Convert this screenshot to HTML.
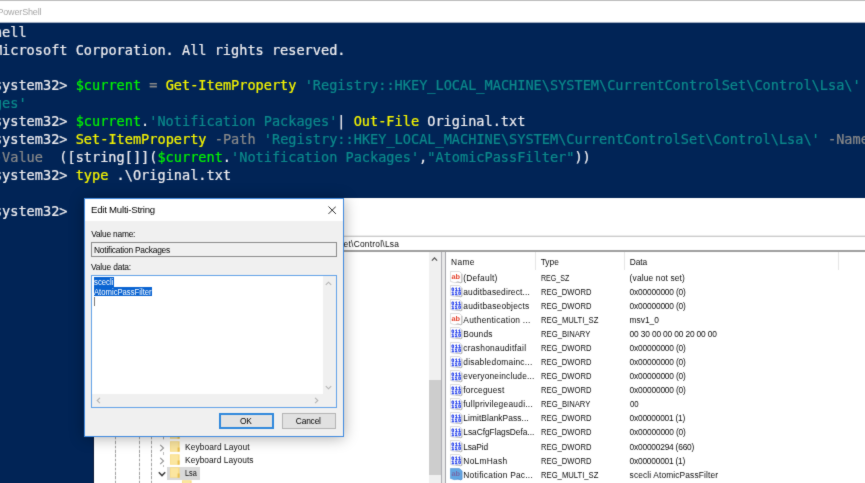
<!DOCTYPE html>
<html lang="en"><head><meta charset="utf-8"><title>PowerShell / Registry Editor - Edit Multi-String</title>
<style>
html,body{margin:0;padding:0;overflow:hidden}
body{width:865px;height:483px;overflow:hidden;position:relative;background:#fff}
.b{position:absolute;display:block}
.t{position:absolute;display:block;white-space:pre;margin:0;padding:0}
.u{font-family:"Liberation Sans",sans-serif}
.m{font-family:"DejaVu Sans Mono","Liberation Mono",monospace;-webkit-text-stroke:0.22px currentColor}
.g{color:#00f400}.y{color:#f4f400}.c{color:#0b8a8c}.d{color:#8a8a8a}
#w{position:absolute;left:-12px;top:-12px;width:889px;height:507px;background:#fff;filter:url(#soft)}
#c{position:absolute;left:12px;top:12px;width:865px;height:483px}
</style></head><body><svg width="0" height="0" style="position:absolute"><defs><filter id="soft" x="0" y="0" width="100%" height="100%" color-interpolation-filters="sRGB"><feConvolveMatrix order="3" preserveAlpha="true" kernelMatrix="0.02 0.07 0.02 0.07 0.64 0.07 0.02 0.07 0.02"/></filter></defs></svg><div id="w"><div id="c">

<div class="b" style="left:-12px;top:-12px;width:889px;height:13px;background:#bdbdbd;"></div>
<div class="b" style="left:-12px;top:22px;width:889px;height:1px;background:#a3afc2;"></div>
<div class="b" style="left:-12px;top:23px;width:889px;height:175px;background:#012456;"></div>
<div class="b" style="left:-12px;top:198px;width:106px;height:297px;background:#012456;"></div>
<div class="b" style="left:93px;top:437px;width:1px;height:58px;background:#0a1a3a;"></div>
<span class="t u" style="left:-2.60px;top:6.80px;font-size:9.0px;line-height:11.7px;color:#a6a6a6;letter-spacing:-0.153px;">PowerShell</span>
<span class="t m" style="left:-6.10px;top:23.90px;font-size:13.58px;line-height:17.65px;color:#eeedf0;letter-spacing:0.001px;">hell</span>
<span class="t m" style="left:-6.10px;top:41.76px;font-size:13.58px;line-height:17.65px;color:#eeedf0;letter-spacing:0.002px;">Microsoft Corporation. All rights reserved.</span>
<span class="t m" style="left:-6.10px;top:77.48px;font-size:13.58px;line-height:17.65px;color:#eeedf0;letter-spacing:0.002px;">system32&gt; <span class="g">$current</span><span class="d"> = </span><span class="y">Get-ItemProperty</span> <span class="c">'Registry::HKEY_LOCAL_MACHINE\SYSTEM\CurrentControlSet\Control\Lsa\'</span></span>
<span class="t m" style="left:-6.10px;top:95.34px;font-size:13.58px;line-height:17.65px;color:#eeedf0;letter-spacing:0.001px;"><span class="c">ges'</span></span>
<span class="t m" style="left:-6.10px;top:113.20px;font-size:13.58px;line-height:17.65px;color:#eeedf0;letter-spacing:0.001px;">system32&gt; <span class="g">$current</span>.<span class="c">'Notification Packages'</span>| <span class="y">Out-File</span> Original.txt</span>
<span class="t m" style="left:-6.10px;top:131.07px;font-size:13.58px;line-height:17.65px;color:#eeedf0;letter-spacing:0.002px;">system32&gt; <span class="y">Set-ItemProperty</span> <span class="d">-Path</span> <span class="c">'Registry::HKEY_LOCAL_MACHINE\SYSTEM\CurrentControlSet\Control\Lsa\'</span> <span class="d">-Name</span></span>
<span class="t m" style="left:-6.10px;top:148.93px;font-size:13.58px;line-height:17.65px;color:#eeedf0;letter-spacing:0.001px;"><span class="d">-Value</span>  ([string[]](<span class="g">$current</span>.<span class="c">'Notification Packages'</span>,<span class="c">"AtomicPassFilter"</span>))</span>
<span class="t m" style="left:-6.10px;top:166.79px;font-size:13.58px;line-height:17.65px;color:#eeedf0;letter-spacing:0.002px;">system32&gt; <span class="y">type</span> .\Original.txt</span>
<span class="t m" style="left:-6.10px;top:202.51px;font-size:13.58px;line-height:17.65px;color:#eeedf0;letter-spacing:0.002px;">system32&gt;</span>
<div class="b" style="left:94px;top:198px;width:783px;height:297px;background:#fff;"></div>
<div class="b" style="left:94px;top:235px;width:783px;height:1px;background:#ececec;"></div>
<div class="b" style="left:94px;top:236px;width:783px;height:1px;background:#cbcbcb;"></div>
<div class="b" style="left:94px;top:250px;width:783px;height:2px;background:#9e9e9e;"></div>
<span class="t u" style="left:117.60px;top:238.91px;font-size:8.4px;line-height:10.92px;color:#0c0c0c;letter-spacing:-0.218px;">Computer\HKEY_LOCAL_MACHINE\SYSTEM\CurrentControlS</span>
<span class="t u" style="left:343.60px;top:238.91px;font-size:8.4px;line-height:10.92px;color:#0c0c0c;letter-spacing:0.247px;">et\Control\Lsa</span>
<div class="b" style="left:115px;top:252px;width:1px;height:243px;background:repeating-linear-gradient(180deg,#a2a2a2 0,#a2a2a2 2.6px,#e4e4e4 2.6px,#e4e4e4 4.4px)"></div>
<div class="b" style="left:139px;top:252px;width:1px;height:243px;background:repeating-linear-gradient(180deg,#a2a2a2 0,#a2a2a2 2.6px,#e4e4e4 2.6px,#e4e4e4 4.4px)"></div>
<div class="b" style="left:151px;top:252px;width:1px;height:243px;background:repeating-linear-gradient(180deg,#a2a2a2 0,#a2a2a2 2.6px,#e4e4e4 2.6px,#e4e4e4 4.4px)"></div>
<div class="b" style="left:163px;top:252px;width:1px;height:188px;background:repeating-linear-gradient(180deg,#a2a2a2 0,#a2a2a2 2.6px,#e4e4e4 2.6px,#e4e4e4 4.4px)"></div>
<svg class="b" style="left:170px;top:428.0px" width="9.6" height="11.0" viewBox="0 0 9.6 10.4"><rect x="0" y="0" width="9.6" height="10.4" fill="#f9db80"/><rect x="0.6" y="0.8" width="7.6" height="8.8" fill="#fbe6a0"/><rect x="7.6" y="6.2" width="2" height="4.2" fill="#e9c04f"/></svg>
<svg class="b" style="left:170px;top:441.0px" width="9.6" height="11.0" viewBox="0 0 9.6 10.4"><rect x="0" y="0" width="9.6" height="10.4" fill="#f9db80"/><rect x="0.6" y="0.8" width="7.6" height="8.8" fill="#fbe6a0"/><rect x="7.6" y="6.2" width="2" height="4.2" fill="#e9c04f"/></svg>
<svg class="b" style="left:170px;top:454.0px" width="9.6" height="11.0" viewBox="0 0 9.6 10.4"><rect x="0" y="0" width="9.6" height="10.4" fill="#f9db80"/><rect x="0.6" y="0.8" width="7.6" height="8.8" fill="#fbe6a0"/><rect x="7.6" y="6.2" width="2" height="4.2" fill="#e9c04f"/></svg>
<div class="b" style="left:167px;top:467px;width:33px;height:13px;background:#d9d9d9;"></div>
<svg class="b" style="left:170px;top:467.3px" width="9.6" height="11.0" viewBox="0 0 9.6 10.4"><rect x="0" y="0" width="9.6" height="10.4" fill="#f9db80"/><rect x="0.6" y="0.8" width="7.6" height="8.8" fill="#fbe6a0"/><rect x="7.6" y="6.2" width="2" height="4.2" fill="#e9c04f"/></svg>
<svg class="b" style="left:182px;top:480.4px" width="9.6" height="11.0" viewBox="0 0 9.6 10.4"><rect x="0" y="0" width="9.6" height="10.4" fill="#f9db80"/><rect x="0.6" y="0.8" width="7.6" height="8.8" fill="#fbe6a0"/><rect x="7.6" y="6.2" width="2" height="4.2" fill="#e9c04f"/></svg>
<svg class="b" style="left:159.4px;top:443.6px" width="6" height="8" viewBox="0 0 6 8"><path d="M1.2 0.9 L4.5 4 L1.2 7.1" fill="none" stroke="#969696" stroke-width="1.15"/></svg>
<svg class="b" style="left:159.4px;top:456.6px" width="6" height="8" viewBox="0 0 6 8"><path d="M1.2 0.9 L4.5 4 L1.2 7.1" fill="none" stroke="#969696" stroke-width="1.15"/></svg>
<svg class="b" style="left:158.3px;top:470.6px" width="8" height="6" viewBox="0 0 8 6"><path d="M0.8 1.2 L4 4.6 L7.2 1.2" fill="none" stroke="#404040" stroke-width="1.5"/></svg>
<div class="b" style="left:163px;top:452px;width:1px;height:3px;background:#bdbdbd"></div>
<div class="b" style="left:163px;top:465px;width:1px;height:2px;background:#bdbdbd"></div>
<span class="t u" style="left:185.00px;top:441.61px;font-size:8.4px;line-height:10.92px;color:#0c0c0c;letter-spacing:0.098px;">Keyboard Layout</span>
<span class="t u" style="left:185.00px;top:454.50px;font-size:8.4px;line-height:10.92px;color:#0c0c0c;letter-spacing:0.068px;">Keyboard Layouts</span>
<span class="t u" style="left:185.00px;top:467.61px;font-size:8.4px;line-height:10.92px;color:#0c0c0c;transform:scaleX(0.8731);transform-origin:0 0;">Lsa</span>
<div class="b" style="left:429px;top:252px;width:12px;height:243px;background:#f0f0f0;"></div>
<div class="b" style="left:429px;top:380px;width:12px;height:95px;background:#cdcdcd;"></div>
<svg class="b" style="left:431px;top:256.2px" width="7" height="6" viewBox="0 0 7 6"><path d="M0.9 4.6 L3.5 1.8 L6.1 4.6" fill="none" stroke="#505050" stroke-width="1.2"/></svg>
<div class="b" style="left:441px;top:252px;width:1px;height:243px;background:#adadb3;"></div>
<div class="b" style="left:442px;top:252px;width:3px;height:243px;background:#e9e9e9;"></div>
<div class="b" style="left:445px;top:252px;width:1px;height:243px;background:#a4a4aa;"></div>
<div class="b" style="left:535px;top:252px;width:1px;height:18px;background:#e5e5e5;"></div>
<div class="b" style="left:624px;top:252px;width:1px;height:18px;background:#e5e5e5;"></div>
<div class="b" style="left:838px;top:252px;width:1px;height:18px;background:#e5e5e5;"></div>
<span class="t u" style="left:451.00px;top:256.50px;font-size:8.4px;line-height:10.92px;color:#0c0c0c;letter-spacing:0.364px;">Name</span>
<span class="t u" style="left:540.70px;top:256.50px;font-size:8.4px;line-height:10.92px;color:#0c0c0c;letter-spacing:0.011px;">Type</span>
<span class="t u" style="left:629.70px;top:256.50px;font-size:8.4px;line-height:10.92px;color:#0c0c0c;letter-spacing:-0.076px;">Data</span>
<svg class="b" style="left:449.8px;top:271.1px" width="13" height="13" viewBox="0 0 13 13"><path d="M0.4 0.5 H9.2 L11.8 2.6 V11.2 C10 12.6 8.6 10.0 6.4 11.3 C4.4 12.5 2.6 10.7 0.4 10.4 Z" fill="#fff" stroke="#cdcdcd" stroke-width="0.7"/><path d="M11.9 3 V11.3 C10 12.7 8.6 10.1 6.4 11.4" fill="none" stroke="#a8a8a8" stroke-width="0.8"/><text x="1.4" y="7.9" style="font-family:'Liberation Sans',sans-serif;font-weight:bold;font-size:7px;text-rendering:geometricPrecision" textLength="8.6" lengthAdjust="spacingAndGlyphs" fill="#e4402a">ab</text></svg>
<span class="t u" style="left:463.30px;top:272.50px;font-size:8.4px;line-height:10.92px;color:#0c0c0c;letter-spacing:0.242px;">(Default)</span>
<span class="t u" style="left:540.70px;top:272.50px;font-size:8.4px;line-height:10.92px;color:#0c0c0c;transform:scaleX(0.8444);transform-origin:0 0;">REG_SZ</span>
<span class="t u" style="left:629.60px;top:272.50px;font-size:8.4px;line-height:10.92px;color:#0c0c0c;letter-spacing:0.155px;">(value not set)</span>
<svg class="b" style="left:449.8px;top:285.2px" width="13" height="13" viewBox="0 0 13 13"><path d="M0.4 0.5 H9.2 L11.8 2.6 V11.2 C10 12.6 8.6 10.0 6.4 11.3 C4.4 12.5 2.6 10.7 0.4 10.4 Z" fill="#fff" stroke="#cdcdcd" stroke-width="0.7"/><path d="M11.9 3 V11.3 C10 12.7 8.6 10.1 6.4 11.4" fill="none" stroke="#a8a8a8" stroke-width="0.8"/><text x="1.5" y="5.7" style="font-family:'Liberation Sans',sans-serif;font-weight:bold;font-size:4.8px;text-rendering:geometricPrecision" textLength="9.4" lengthAdjust="spacing" fill="#1230ea" stroke="#1230ea" stroke-width="0.28">011</text><text x="1.5" y="9.9" style="font-family:'Liberation Sans',sans-serif;font-weight:bold;font-size:4.8px;text-rendering:geometricPrecision" textLength="9.4" lengthAdjust="spacing" fill="#1230ea" stroke="#1230ea" stroke-width="0.28">110</text></svg>
<span class="t u" style="left:463.30px;top:286.58px;font-size:8.4px;line-height:10.92px;color:#0c0c0c;letter-spacing:0.161px;">auditbasedirect...</span>
<span class="t u" style="left:540.70px;top:286.58px;font-size:8.4px;line-height:10.92px;color:#0c0c0c;transform:scaleX(0.9102);transform-origin:0 0;">REG_DWORD</span>
<span class="t u" style="left:629.60px;top:286.58px;font-size:8.4px;line-height:10.92px;color:#0c0c0c;letter-spacing:-0.191px;">0x00000000 (0)</span>
<svg class="b" style="left:449.8px;top:299.3px" width="13" height="13" viewBox="0 0 13 13"><path d="M0.4 0.5 H9.2 L11.8 2.6 V11.2 C10 12.6 8.6 10.0 6.4 11.3 C4.4 12.5 2.6 10.7 0.4 10.4 Z" fill="#fff" stroke="#cdcdcd" stroke-width="0.7"/><path d="M11.9 3 V11.3 C10 12.7 8.6 10.1 6.4 11.4" fill="none" stroke="#a8a8a8" stroke-width="0.8"/><text x="1.5" y="5.7" style="font-family:'Liberation Sans',sans-serif;font-weight:bold;font-size:4.8px;text-rendering:geometricPrecision" textLength="9.4" lengthAdjust="spacing" fill="#1230ea" stroke="#1230ea" stroke-width="0.28">011</text><text x="1.5" y="9.9" style="font-family:'Liberation Sans',sans-serif;font-weight:bold;font-size:4.8px;text-rendering:geometricPrecision" textLength="9.4" lengthAdjust="spacing" fill="#1230ea" stroke="#1230ea" stroke-width="0.28">110</text></svg>
<span class="t u" style="left:463.30px;top:300.68px;font-size:8.4px;line-height:10.92px;color:#0c0c0c;letter-spacing:0.196px;">auditbaseobjects</span>
<span class="t u" style="left:540.70px;top:300.68px;font-size:8.4px;line-height:10.92px;color:#0c0c0c;transform:scaleX(0.9102);transform-origin:0 0;">REG_DWORD</span>
<span class="t u" style="left:629.60px;top:300.68px;font-size:8.4px;line-height:10.92px;color:#0c0c0c;letter-spacing:-0.191px;">0x00000000 (0)</span>
<svg class="b" style="left:449.8px;top:313.4px" width="13" height="13" viewBox="0 0 13 13"><path d="M0.4 0.5 H9.2 L11.8 2.6 V11.2 C10 12.6 8.6 10.0 6.4 11.3 C4.4 12.5 2.6 10.7 0.4 10.4 Z" fill="#fff" stroke="#cdcdcd" stroke-width="0.7"/><path d="M11.9 3 V11.3 C10 12.7 8.6 10.1 6.4 11.4" fill="none" stroke="#a8a8a8" stroke-width="0.8"/><text x="1.4" y="7.9" style="font-family:'Liberation Sans',sans-serif;font-weight:bold;font-size:7px;text-rendering:geometricPrecision" textLength="8.6" lengthAdjust="spacingAndGlyphs" fill="#e4402a">ab</text></svg>
<span class="t u" style="left:463.30px;top:314.77px;font-size:8.4px;line-height:10.92px;color:#0c0c0c;letter-spacing:0.278px;">Authentication ...</span>
<span class="t u" style="left:540.70px;top:314.77px;font-size:8.4px;line-height:10.92px;color:#0c0c0c;transform:scaleX(0.9159);transform-origin:0 0;">REG_MULTI_SZ</span>
<span class="t u" style="left:629.60px;top:314.77px;font-size:8.4px;line-height:10.92px;color:#0c0c0c;letter-spacing:-0.021px;">msv1_0</span>
<svg class="b" style="left:449.8px;top:327.4px" width="13" height="13" viewBox="0 0 13 13"><path d="M0.4 0.5 H9.2 L11.8 2.6 V11.2 C10 12.6 8.6 10.0 6.4 11.3 C4.4 12.5 2.6 10.7 0.4 10.4 Z" fill="#fff" stroke="#cdcdcd" stroke-width="0.7"/><path d="M11.9 3 V11.3 C10 12.7 8.6 10.1 6.4 11.4" fill="none" stroke="#a8a8a8" stroke-width="0.8"/><text x="1.5" y="5.7" style="font-family:'Liberation Sans',sans-serif;font-weight:bold;font-size:4.8px;text-rendering:geometricPrecision" textLength="9.4" lengthAdjust="spacing" fill="#1230ea" stroke="#1230ea" stroke-width="0.28">011</text><text x="1.5" y="9.9" style="font-family:'Liberation Sans',sans-serif;font-weight:bold;font-size:4.8px;text-rendering:geometricPrecision" textLength="9.4" lengthAdjust="spacing" fill="#1230ea" stroke="#1230ea" stroke-width="0.28">110</text></svg>
<span class="t u" style="left:463.30px;top:328.85px;font-size:8.4px;line-height:10.92px;color:#0c0c0c;letter-spacing:0.132px;">Bounds</span>
<span class="t u" style="left:540.70px;top:328.85px;font-size:8.4px;line-height:10.92px;color:#0c0c0c;transform:scaleX(0.9175);transform-origin:0 0;">REG_BINARY</span>
<span class="t u" style="left:629.60px;top:328.85px;font-size:8.4px;line-height:10.92px;color:#0c0c0c;letter-spacing:-0.161px;">00 30 00 00 00 20 00 00</span>
<svg class="b" style="left:449.8px;top:341.5px" width="13" height="13" viewBox="0 0 13 13"><path d="M0.4 0.5 H9.2 L11.8 2.6 V11.2 C10 12.6 8.6 10.0 6.4 11.3 C4.4 12.5 2.6 10.7 0.4 10.4 Z" fill="#fff" stroke="#cdcdcd" stroke-width="0.7"/><path d="M11.9 3 V11.3 C10 12.7 8.6 10.1 6.4 11.4" fill="none" stroke="#a8a8a8" stroke-width="0.8"/><text x="1.5" y="5.7" style="font-family:'Liberation Sans',sans-serif;font-weight:bold;font-size:4.8px;text-rendering:geometricPrecision" textLength="9.4" lengthAdjust="spacing" fill="#1230ea" stroke="#1230ea" stroke-width="0.28">011</text><text x="1.5" y="9.9" style="font-family:'Liberation Sans',sans-serif;font-weight:bold;font-size:4.8px;text-rendering:geometricPrecision" textLength="9.4" lengthAdjust="spacing" fill="#1230ea" stroke="#1230ea" stroke-width="0.28">110</text></svg>
<span class="t u" style="left:463.30px;top:342.94px;font-size:8.4px;line-height:10.92px;color:#0c0c0c;letter-spacing:0.271px;">crashonauditfail</span>
<span class="t u" style="left:540.70px;top:342.94px;font-size:8.4px;line-height:10.92px;color:#0c0c0c;transform:scaleX(0.9102);transform-origin:0 0;">REG_DWORD</span>
<span class="t u" style="left:629.60px;top:342.94px;font-size:8.4px;line-height:10.92px;color:#0c0c0c;letter-spacing:-0.191px;">0x00000000 (0)</span>
<svg class="b" style="left:449.8px;top:355.6px" width="13" height="13" viewBox="0 0 13 13"><path d="M0.4 0.5 H9.2 L11.8 2.6 V11.2 C10 12.6 8.6 10.0 6.4 11.3 C4.4 12.5 2.6 10.7 0.4 10.4 Z" fill="#fff" stroke="#cdcdcd" stroke-width="0.7"/><path d="M11.9 3 V11.3 C10 12.7 8.6 10.1 6.4 11.4" fill="none" stroke="#a8a8a8" stroke-width="0.8"/><text x="1.5" y="5.7" style="font-family:'Liberation Sans',sans-serif;font-weight:bold;font-size:4.8px;text-rendering:geometricPrecision" textLength="9.4" lengthAdjust="spacing" fill="#1230ea" stroke="#1230ea" stroke-width="0.28">011</text><text x="1.5" y="9.9" style="font-family:'Liberation Sans',sans-serif;font-weight:bold;font-size:4.8px;text-rendering:geometricPrecision" textLength="9.4" lengthAdjust="spacing" fill="#1230ea" stroke="#1230ea" stroke-width="0.28">110</text></svg>
<span class="t u" style="left:463.30px;top:357.02px;font-size:8.4px;line-height:10.92px;color:#0c0c0c;letter-spacing:0.236px;">disabledomainc...</span>
<span class="t u" style="left:540.70px;top:357.02px;font-size:8.4px;line-height:10.92px;color:#0c0c0c;transform:scaleX(0.9102);transform-origin:0 0;">REG_DWORD</span>
<span class="t u" style="left:629.60px;top:357.02px;font-size:8.4px;line-height:10.92px;color:#0c0c0c;letter-spacing:-0.191px;">0x00000000 (0)</span>
<svg class="b" style="left:449.8px;top:369.7px" width="13" height="13" viewBox="0 0 13 13"><path d="M0.4 0.5 H9.2 L11.8 2.6 V11.2 C10 12.6 8.6 10.0 6.4 11.3 C4.4 12.5 2.6 10.7 0.4 10.4 Z" fill="#fff" stroke="#cdcdcd" stroke-width="0.7"/><path d="M11.9 3 V11.3 C10 12.7 8.6 10.1 6.4 11.4" fill="none" stroke="#a8a8a8" stroke-width="0.8"/><text x="1.5" y="5.7" style="font-family:'Liberation Sans',sans-serif;font-weight:bold;font-size:4.8px;text-rendering:geometricPrecision" textLength="9.4" lengthAdjust="spacing" fill="#1230ea" stroke="#1230ea" stroke-width="0.28">011</text><text x="1.5" y="9.9" style="font-family:'Liberation Sans',sans-serif;font-weight:bold;font-size:4.8px;text-rendering:geometricPrecision" textLength="9.4" lengthAdjust="spacing" fill="#1230ea" stroke="#1230ea" stroke-width="0.28">110</text></svg>
<span class="t u" style="left:463.30px;top:371.11px;font-size:8.4px;line-height:10.92px;color:#0c0c0c;letter-spacing:0.179px;">everyoneinclude...</span>
<span class="t u" style="left:540.70px;top:371.11px;font-size:8.4px;line-height:10.92px;color:#0c0c0c;transform:scaleX(0.9102);transform-origin:0 0;">REG_DWORD</span>
<span class="t u" style="left:629.60px;top:371.11px;font-size:8.4px;line-height:10.92px;color:#0c0c0c;letter-spacing:-0.191px;">0x00000000 (0)</span>
<svg class="b" style="left:449.8px;top:383.8px" width="13" height="13" viewBox="0 0 13 13"><path d="M0.4 0.5 H9.2 L11.8 2.6 V11.2 C10 12.6 8.6 10.0 6.4 11.3 C4.4 12.5 2.6 10.7 0.4 10.4 Z" fill="#fff" stroke="#cdcdcd" stroke-width="0.7"/><path d="M11.9 3 V11.3 C10 12.7 8.6 10.1 6.4 11.4" fill="none" stroke="#a8a8a8" stroke-width="0.8"/><text x="1.5" y="5.7" style="font-family:'Liberation Sans',sans-serif;font-weight:bold;font-size:4.8px;text-rendering:geometricPrecision" textLength="9.4" lengthAdjust="spacing" fill="#1230ea" stroke="#1230ea" stroke-width="0.28">011</text><text x="1.5" y="9.9" style="font-family:'Liberation Sans',sans-serif;font-weight:bold;font-size:4.8px;text-rendering:geometricPrecision" textLength="9.4" lengthAdjust="spacing" fill="#1230ea" stroke="#1230ea" stroke-width="0.28">110</text></svg>
<span class="t u" style="left:463.30px;top:385.19px;font-size:8.4px;line-height:10.92px;color:#0c0c0c;letter-spacing:0.209px;">forceguest</span>
<span class="t u" style="left:540.70px;top:385.19px;font-size:8.4px;line-height:10.92px;color:#0c0c0c;transform:scaleX(0.9102);transform-origin:0 0;">REG_DWORD</span>
<span class="t u" style="left:629.60px;top:385.19px;font-size:8.4px;line-height:10.92px;color:#0c0c0c;letter-spacing:-0.191px;">0x00000000 (0)</span>
<svg class="b" style="left:449.8px;top:397.9px" width="13" height="13" viewBox="0 0 13 13"><path d="M0.4 0.5 H9.2 L11.8 2.6 V11.2 C10 12.6 8.6 10.0 6.4 11.3 C4.4 12.5 2.6 10.7 0.4 10.4 Z" fill="#fff" stroke="#cdcdcd" stroke-width="0.7"/><path d="M11.9 3 V11.3 C10 12.7 8.6 10.1 6.4 11.4" fill="none" stroke="#a8a8a8" stroke-width="0.8"/><text x="1.5" y="5.7" style="font-family:'Liberation Sans',sans-serif;font-weight:bold;font-size:4.8px;text-rendering:geometricPrecision" textLength="9.4" lengthAdjust="spacing" fill="#1230ea" stroke="#1230ea" stroke-width="0.28">011</text><text x="1.5" y="9.9" style="font-family:'Liberation Sans',sans-serif;font-weight:bold;font-size:4.8px;text-rendering:geometricPrecision" textLength="9.4" lengthAdjust="spacing" fill="#1230ea" stroke="#1230ea" stroke-width="0.28">110</text></svg>
<span class="t u" style="left:463.30px;top:399.29px;font-size:8.4px;line-height:10.92px;color:#0c0c0c;letter-spacing:0.249px;">fullprivilegeaudi...</span>
<span class="t u" style="left:540.70px;top:399.29px;font-size:8.4px;line-height:10.92px;color:#0c0c0c;transform:scaleX(0.9175);transform-origin:0 0;">REG_BINARY</span>
<span class="t u" style="left:629.60px;top:399.29px;font-size:8.4px;line-height:10.92px;color:#0c0c0c;transform:scaleX(0.9327);transform-origin:0 0;">00</span>
<svg class="b" style="left:449.8px;top:412.0px" width="13" height="13" viewBox="0 0 13 13"><path d="M0.4 0.5 H9.2 L11.8 2.6 V11.2 C10 12.6 8.6 10.0 6.4 11.3 C4.4 12.5 2.6 10.7 0.4 10.4 Z" fill="#fff" stroke="#cdcdcd" stroke-width="0.7"/><path d="M11.9 3 V11.3 C10 12.7 8.6 10.1 6.4 11.4" fill="none" stroke="#a8a8a8" stroke-width="0.8"/><text x="1.5" y="5.7" style="font-family:'Liberation Sans',sans-serif;font-weight:bold;font-size:4.8px;text-rendering:geometricPrecision" textLength="9.4" lengthAdjust="spacing" fill="#1230ea" stroke="#1230ea" stroke-width="0.28">011</text><text x="1.5" y="9.9" style="font-family:'Liberation Sans',sans-serif;font-weight:bold;font-size:4.8px;text-rendering:geometricPrecision" textLength="9.4" lengthAdjust="spacing" fill="#1230ea" stroke="#1230ea" stroke-width="0.28">110</text></svg>
<span class="t u" style="left:463.30px;top:413.37px;font-size:8.4px;line-height:10.92px;color:#0c0c0c;letter-spacing:0.069px;">LimitBlankPass...</span>
<span class="t u" style="left:540.70px;top:413.37px;font-size:8.4px;line-height:10.92px;color:#0c0c0c;transform:scaleX(0.9102);transform-origin:0 0;">REG_DWORD</span>
<span class="t u" style="left:629.60px;top:413.37px;font-size:8.4px;line-height:10.92px;color:#0c0c0c;letter-spacing:-0.227px;">0x00000001 (1)</span>
<svg class="b" style="left:449.8px;top:426.0px" width="13" height="13" viewBox="0 0 13 13"><path d="M0.4 0.5 H9.2 L11.8 2.6 V11.2 C10 12.6 8.6 10.0 6.4 11.3 C4.4 12.5 2.6 10.7 0.4 10.4 Z" fill="#fff" stroke="#cdcdcd" stroke-width="0.7"/><path d="M11.9 3 V11.3 C10 12.7 8.6 10.1 6.4 11.4" fill="none" stroke="#a8a8a8" stroke-width="0.8"/><text x="1.5" y="5.7" style="font-family:'Liberation Sans',sans-serif;font-weight:bold;font-size:4.8px;text-rendering:geometricPrecision" textLength="9.4" lengthAdjust="spacing" fill="#1230ea" stroke="#1230ea" stroke-width="0.28">011</text><text x="1.5" y="9.9" style="font-family:'Liberation Sans',sans-serif;font-weight:bold;font-size:4.8px;text-rendering:geometricPrecision" textLength="9.4" lengthAdjust="spacing" fill="#1230ea" stroke="#1230ea" stroke-width="0.28">110</text></svg>
<span class="t u" style="left:463.30px;top:427.44px;font-size:8.4px;line-height:10.92px;color:#0c0c0c;letter-spacing:-0.044px;">LsaCfgFlagsDefa...</span>
<span class="t u" style="left:540.70px;top:427.44px;font-size:8.4px;line-height:10.92px;color:#0c0c0c;transform:scaleX(0.9102);transform-origin:0 0;">REG_DWORD</span>
<span class="t u" style="left:629.60px;top:427.44px;font-size:8.4px;line-height:10.92px;color:#0c0c0c;letter-spacing:-0.191px;">0x00000000 (0)</span>
<svg class="b" style="left:449.8px;top:440.1px" width="13" height="13" viewBox="0 0 13 13"><path d="M0.4 0.5 H9.2 L11.8 2.6 V11.2 C10 12.6 8.6 10.0 6.4 11.3 C4.4 12.5 2.6 10.7 0.4 10.4 Z" fill="#fff" stroke="#cdcdcd" stroke-width="0.7"/><path d="M11.9 3 V11.3 C10 12.7 8.6 10.1 6.4 11.4" fill="none" stroke="#a8a8a8" stroke-width="0.8"/><text x="1.5" y="5.7" style="font-family:'Liberation Sans',sans-serif;font-weight:bold;font-size:4.8px;text-rendering:geometricPrecision" textLength="9.4" lengthAdjust="spacing" fill="#1230ea" stroke="#1230ea" stroke-width="0.28">011</text><text x="1.5" y="9.9" style="font-family:'Liberation Sans',sans-serif;font-weight:bold;font-size:4.8px;text-rendering:geometricPrecision" textLength="9.4" lengthAdjust="spacing" fill="#1230ea" stroke="#1230ea" stroke-width="0.28">110</text></svg>
<span class="t u" style="left:463.30px;top:441.54px;font-size:8.4px;line-height:10.92px;color:#0c0c0c;letter-spacing:-0.152px;">LsaPid</span>
<span class="t u" style="left:540.70px;top:441.54px;font-size:8.4px;line-height:10.92px;color:#0c0c0c;transform:scaleX(0.9102);transform-origin:0 0;">REG_DWORD</span>
<span class="t u" style="left:629.60px;top:441.54px;font-size:8.4px;line-height:10.92px;color:#0c0c0c;letter-spacing:-0.219px;">0x00000294 (660)</span>
<svg class="b" style="left:449.8px;top:454.2px" width="13" height="13" viewBox="0 0 13 13"><path d="M0.4 0.5 H9.2 L11.8 2.6 V11.2 C10 12.6 8.6 10.0 6.4 11.3 C4.4 12.5 2.6 10.7 0.4 10.4 Z" fill="#fff" stroke="#cdcdcd" stroke-width="0.7"/><path d="M11.9 3 V11.3 C10 12.7 8.6 10.1 6.4 11.4" fill="none" stroke="#a8a8a8" stroke-width="0.8"/><text x="1.5" y="5.7" style="font-family:'Liberation Sans',sans-serif;font-weight:bold;font-size:4.8px;text-rendering:geometricPrecision" textLength="9.4" lengthAdjust="spacing" fill="#1230ea" stroke="#1230ea" stroke-width="0.28">011</text><text x="1.5" y="9.9" style="font-family:'Liberation Sans',sans-serif;font-weight:bold;font-size:4.8px;text-rendering:geometricPrecision" textLength="9.4" lengthAdjust="spacing" fill="#1230ea" stroke="#1230ea" stroke-width="0.28">110</text></svg>
<span class="t u" style="left:463.30px;top:455.62px;font-size:8.4px;line-height:10.92px;color:#0c0c0c;letter-spacing:0.287px;">NoLmHash</span>
<span class="t u" style="left:540.70px;top:455.62px;font-size:8.4px;line-height:10.92px;color:#0c0c0c;transform:scaleX(0.9102);transform-origin:0 0;">REG_DWORD</span>
<span class="t u" style="left:629.60px;top:455.62px;font-size:8.4px;line-height:10.92px;color:#0c0c0c;letter-spacing:-0.227px;">0x00000001 (1)</span>
<svg class="b" style="left:449.8px;top:468.3px" width="13" height="13" viewBox="0 0 13 13"><path d="M0.4 0.5 H9.2 L11.8 2.6 V11.2 C10 12.6 8.6 10.0 6.4 11.3 C4.4 12.5 2.6 10.7 0.4 10.4 Z" fill="#62a6e2" stroke="#5b9bd8" stroke-width="0.7"/><path d="M11.9 3 V11.3 C10 12.7 8.6 10.1 6.4 11.4" fill="none" stroke="#4a8bd0" stroke-width="0.8"/><text x="1.4" y="7.9" style="font-family:'Liberation Sans',sans-serif;font-weight:bold;font-size:7px;text-rendering:geometricPrecision" textLength="8.6" lengthAdjust="spacingAndGlyphs" fill="#7668a6">ab</text></svg>
<span class="t u" style="left:463.30px;top:469.71px;font-size:8.4px;line-height:10.92px;color:#0c0c0c;letter-spacing:0.238px;">Notification Pac...</span>
<span class="t u" style="left:540.70px;top:469.71px;font-size:8.4px;line-height:10.92px;color:#0c0c0c;transform:scaleX(0.9159);transform-origin:0 0;">REG_MULTI_SZ</span>
<span class="t u" style="left:629.60px;top:469.71px;font-size:8.4px;line-height:10.92px;color:#0c0c0c;letter-spacing:0.124px;">scecli AtomicPassFilter</span>
<div class="b" style="left:84px;top:198px;width:258px;height:237px;background:#f0f0f0;border:1px solid #3f8ae0;box-shadow:0 1px 14px rgba(0,0,0,.33)"></div>
<div class="b" style="left:85px;top:199px;width:258px;height:22px;background:#fff;"></div>
<span class="t u" style="left:91.00px;top:204.31px;font-size:9.6px;line-height:12.48px;color:#000;letter-spacing:-0.219px;">Edit Multi-String</span>
<svg class="b" style="left:328px;top:205.5px" width="8.4" height="8.4" viewBox="0 0 8.4 8.4"><path d="M0.5 0.5 L7.9 7.9 M7.9 0.5 L0.5 7.9" stroke="#222" stroke-width="0.95" fill="none"/></svg>
<span class="t u" style="left:91.20px;top:229.41px;font-size:8.4px;line-height:10.92px;color:#000;letter-spacing:-0.219px;">Value name:</span>
<div class="b" style="left:91px;top:242px;width:244px;height:13px;border:1px solid #8b8b8b;background:#f0f0f0"></div>
<span class="t u" style="left:94.00px;top:244.81px;font-size:8.4px;line-height:10.92px;color:#000;letter-spacing:-0.217px;">Notification Packages</span>
<span class="t u" style="left:91.00px;top:261.50px;font-size:8.4px;line-height:10.92px;color:#000;letter-spacing:-0.161px;">Value data:</span>
<div class="b" style="left:91px;top:275px;width:244px;height:131px;border:1px solid #62a2e8;background:#fff"></div>
<div class="b" style="left:323px;top:276px;width:13px;height:131px;background:#f0f0f0;"></div>
<div class="b" style="left:92px;top:394px;width:244px;height:13px;background:#f0f0f0;"></div>
<svg class="b" style="left:325.30px;top:280.80px" width="7" height="5" viewBox="0 0 7 5"><path d="M0.8 3.9 L3.5 1.2 L6.2 3.9" fill="none" stroke="#b4b4b4" stroke-width="1.15"/></svg>
<svg class="b" style="left:325.30px;top:385.10px" width="7" height="5" viewBox="0 0 7 5"><path d="M0.8 1.1 L3.5 3.8 L6.2 1.1" fill="none" stroke="#b4b4b4" stroke-width="1.15"/></svg>
<svg class="b" style="left:96.30px;top:396.70px" width="5" height="7" viewBox="0 0 5 7"><path d="M3.9 0.8 L1.2 3.5 L3.9 6.2" fill="none" stroke="#b4b4b4" stroke-width="1.15"/></svg>
<svg class="b" style="left:313.80px;top:396.70px" width="5" height="7" viewBox="0 0 5 7"><path d="M1.1 0.8 L3.8 3.5 L1.1 6.2" fill="none" stroke="#b4b4b4" stroke-width="1.15"/></svg>
<div class="b" style="left:93.7px;top:277px;width:20.6px;height:9.7px;background:#0a64d2;"></div>
<div class="b" style="left:93.7px;top:286.7px;width:58.1px;height:9.4px;background:#0a64d2;"></div>
<span class="t u" style="left:93.60px;top:277.00px;font-size:8.4px;line-height:10.92px;color:#fff;transform:scaleX(0.9259);transform-origin:0 0;">scecli</span>
<span class="t u" style="left:93.60px;top:286.61px;font-size:8.4px;line-height:10.92px;color:#fff;transform:scaleX(0.9168);transform-origin:0 0;">AtomicPassFilter</span>
<div class="b" style="left:94px;top:297px;width:1px;height:9px;background:#777;"></div>
<div class="b" style="left:219px;top:413px;width:50.5px;height:11.6px;border:2px solid #2f88dc;background:#e3e3e3"></div>
<div class="b" style="left:282px;top:413px;width:52px;height:13.6px;border:1px solid #b3b3b3;background:#e1e1e1"></div>
<span class="t u" style="left:240.00px;top:416.20px;font-size:8.4px;line-height:10.92px;color:#000;letter-spacing:-0.205px;">OK</span>
<span class="t u" style="left:295.80px;top:416.20px;font-size:8.4px;line-height:10.92px;color:#000;letter-spacing:-0.180px;">Cancel</span>
</div></div></body></html>
